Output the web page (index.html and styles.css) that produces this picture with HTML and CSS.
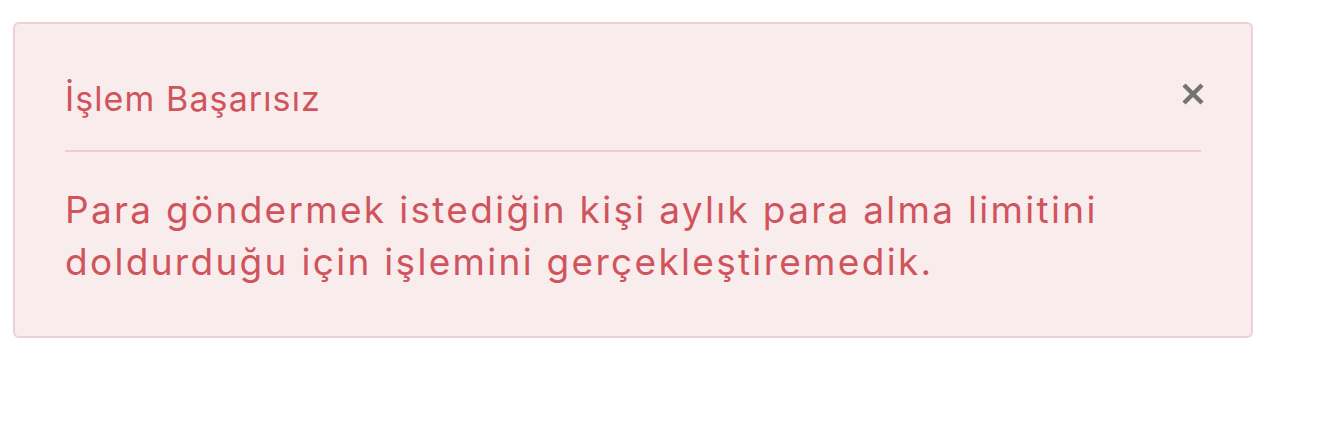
FILE: index.html
```html
<!doctype html>
<html lang="tr">
  <head>
    <meta charset="UTF-8" />
    <title>İşlem Başarısız</title>
    <link rel="stylesheet" href="styles.css">
  </head>
  <body>
    <div class="page">
      <div class="alert">
        <div class="alert-head">
          <span class="alert-title">İşlem Başarısız</span>
          <button class="alert-close" aria-label="Kapat">
            <svg width="22" height="22" viewBox="0 0 22 22">
              <path d="M2 2 L20 20 M20 2 L2 20" stroke="#737373" stroke-width="4.4" fill="none" />
            </svg>
          </button>
        </div>
        <p class="alert-text">Para göndermek istediğin kişi aylık para alma limitini doldurduğu için işlemini gerçekleştiremedik.</p>
      </div>
    </div>
  </body>
</html>
```

FILE: styles.css
```css
body {
  margin: 0;
  background-color: #fff;
  font-family: Inter, 'Noto Sans', sans-serif;
}

.page {
  padding: 22px 0 0 13px;
}

.alert {
  width: 1240px;
  box-sizing: border-box;
  border: 2px solid #ebd0d5;
  border-radius: 6px;
  background-color: #f9eced;
  padding: 54px 50px 48px 50px;
  color: #d0545c;
}

.alert-head {
  display: flex;
  justify-content: space-between;
  align-items: flex-start;
  padding-bottom: 31px;
  border-bottom: 2px solid #f2cace;
}

.alert-title {
  font-size: 34px;
  line-height: 41px;
  letter-spacing: 1.1px;
}

.alert-close {
  border: none;
  background: none;
  padding: 0;
  margin: 5px -3px 0 0;
  width: 22px;
  height: 22px;
  cursor: pointer;
  display: flex;
}

.alert-text {
  margin: 32px 0 0 0;
  font-size: 37px;
  line-height: 52px;
  letter-spacing: 2.3px;
}
```
